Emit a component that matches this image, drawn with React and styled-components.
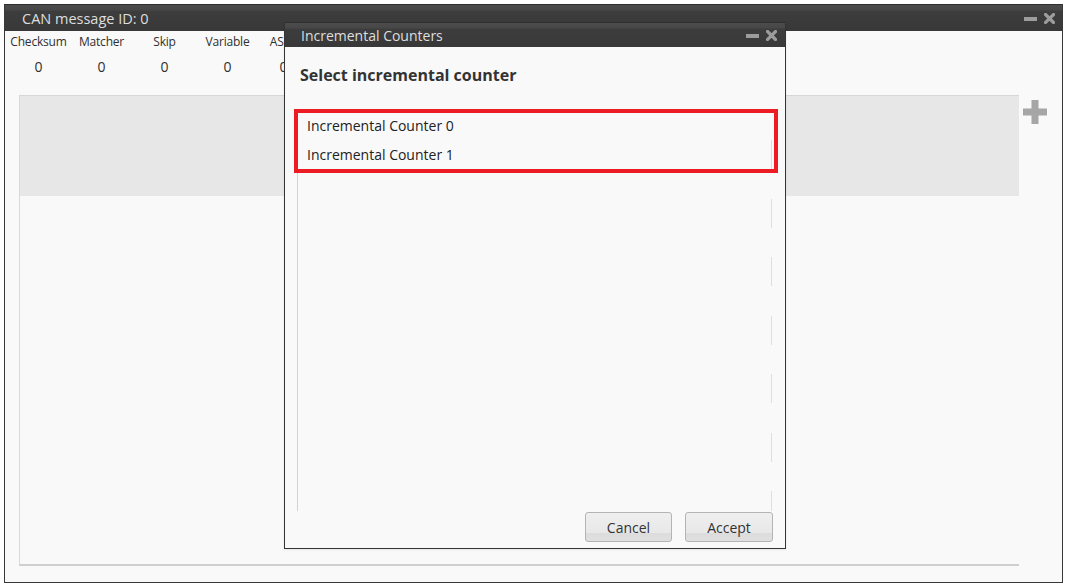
import React from "react";
import styled, { createGlobalStyle } from "styled-components";

const Global = createGlobalStyle`
  html, body { margin: 0; padding: 0; background: #ffffff; }
  body { font-family: "Open Sans", "Noto Sans", sans-serif; }
  * { box-sizing: border-box; }
`;

const Page = styled.div`
  position: relative;
  width: 1066px;
  height: 587px;
  padding: 4px 3px 4px 4px;
`;

const Window = styled.div`
  width: 1059px;
  height: 579px;
  border: 1px solid #383838;
  border-top: none;
  background: #f9f9f9;
  display: flex;
  flex-direction: column;
`;

const TitleBar = styled.div`
  height: ${(p) => p.$h}px;
  flex: none;
  display: flex;
  align-items: center;
  justify-content: space-between;
  padding: 0 ${(p) => p.$pr}px 0 ${(p) => p.$pl}px;
  background: linear-gradient(#2f2f2f 0px, #2f2f2f 1px, #4c4c4c 1px, #474747 6px, #3d3d3d 7px, #383838 100%);
  color: #dedede;
  font-size: ${(p) => p.$fs}px;
`;

const TitleText = styled.span`
  padding-top: 1px;
`;

const Controls = styled.div`
  display: flex;
  align-items: center;
  gap: ${(p) => p.$gap}px;
  padding-top: 2px;
`;

const WinControls = ({ gap }) => (
  <Controls $gap={gap}>
    <svg width="13" height="4" viewBox="0 0 13 4">
      <rect x="0" y="0" width="13" height="4" fill="#9c9c9c" />
    </svg>
    <svg width="11" height="11" viewBox="0 0 11 11">
      <path d="M1.5 1.5 L9.5 9.5 M9.5 1.5 L1.5 9.5" stroke="#9c9c9c" strokeWidth="3.2" strokeLinecap="square" />
    </svg>
  </Controls>
);

const Body = styled.div`
  flex: 1;
  display: flex;
  flex-direction: column;
  padding: 0 0 16px 14px;
`;

const StatsGrid = styled.div`
  display: grid;
  grid-template-columns: 63px 63px 63px 63px 49px;
  margin-left: -12px;
  font-size: 12px;
  color: #303030;
  text-align: center;
`;

const StatHead = styled.div`
  height: 20px;
  line-height: 20px;
  margin-top: 1px;
  letter-spacing: -0.2px;
`;

const StatValue = styled.div`
  height: 24px;
  line-height: 24px;
  margin-top: 3px;
  font-size: 14px;
`;

const PanelRow = styled.div`
  flex: 1;
  display: flex;
  margin-top: 16px;
  gap: 4px;
`;

const Panel = styled.div`
  width: 1000px;
  display: flex;
  flex-direction: column;
  border-left: 1px solid #d8d8d8;
  border-bottom: 2px solid #cfcfcf;
  background: #f9f9f9;
`;

const GreyStrip = styled.div`
  height: 101px;
  background: #e7e7e7;
  border-top: 1px solid #d6d6d6;
`;

const AddButton = styled.div`
  width: 24px;
  height: 24px;
  margin-top: 5px;
`;

const Dialog = styled.div`
  position: absolute;
  left: 284px;
  top: 22px;
  width: 502px;
  height: 527px;
  border: 1px solid #343434;
  border-top: none;
  background: #f9f9f9;
  display: flex;
  flex-direction: column;
  box-shadow: 0 1px 2px rgba(0,0,0,0.08);
`;

const DialogBody = styled.div`
  flex: 1;
  display: flex;
  flex-direction: column;
  padding: 0 12px 6px 12px;
`;

const Heading = styled.div`
  height: 64px;
  padding-top: 17px;
  padding-left: 3px;
  font-size: 16px;
  font-weight: 700;
  color: #333;
`;

const ListBox = styled.div`
  position: relative;
  flex: 1;
  width: 475px;
  border-left: 1px solid #d2d2d2;
  background:
    repeating-linear-gradient(to bottom, transparent 0px, transparent 29.5px, #dedede 29.5px, #dedede 58.5px)
    right top / 1px 100% no-repeat;
`;

const ListItem = styled.div`
  height: 29px;
  line-height: 29px;
  padding-left: 9px;
  font-size: 14px;
  color: #222;
`;

const Highlight = styled.div`
  position: absolute;
  left: -4px;
  top: -2px;
  width: 484px;
  height: 64px;
  border: 4px solid #ed1c24;
  pointer-events: none;
`;

const ButtonRow = styled.div`
  display: flex;
  justify-content: flex-end;
  gap: 13px;
  margin-top: 1px;
`;

const Button = styled.button`
  width: ${(p) => p.$w}px;
  height: 30px;
  border: 1px solid #b4b4b4;
  border-radius: 3px;
  background: linear-gradient(#efefef 0%, #e8e8e8 70%, #dcdcdc 71%, #e0e0e0 100%);
  font-family: "Open Sans", "Noto Sans", sans-serif;
  font-size: 14px;
  color: #333;
  padding: 0;
`;

const stats = ["Checksum", "Matcher", "Skip", "Variable", "ASCII"];

export default function App() {
  return (
    <Page>
      <Global />
      <Window>
        <TitleBar $h={27} $pl={17} $pr={7} $fs={14.5}>
          <TitleText>CAN message ID: 0</TitleText>
          <WinControls gap={7} />
        </TitleBar>
        <Body>
          <StatsGrid>
            {stats.map((s) => (
              <StatHead key={s}>{s}</StatHead>
            ))}
            {stats.map((s) => (
              <StatValue key={s + "v"}>0</StatValue>
            ))}
          </StatsGrid>
          <PanelRow>
            <Panel>
              <GreyStrip />
            </Panel>
            <AddButton>
              <svg width="24" height="24" viewBox="0 0 24 24">
                <rect x="8.5" y="0" width="7" height="24" fill="#a6a6a6" />
                <rect x="0" y="8.5" width="24" height="7" fill="#a6a6a6" />
              </svg>
            </AddButton>
          </PanelRow>
        </Body>
      </Window>
      <Dialog>
        <TitleBar $h={25} $pl={16} $pr={8} $fs={14}>
          <TitleText>Incremental Counters</TitleText>
          <WinControls gap={7} />
        </TitleBar>
        <DialogBody>
          <Heading>Select incremental counter</Heading>
          <ListBox>
            <ListItem>Incremental Counter 0</ListItem>
            <ListItem>Incremental Counter 1</ListItem>
            <Highlight />
          </ListBox>
          <ButtonRow>
            <Button $w={87}>Cancel</Button>
            <Button $w={88}>Accept</Button>
          </ButtonRow>
        </DialogBody>
      </Dialog>
    </Page>
  );
}
